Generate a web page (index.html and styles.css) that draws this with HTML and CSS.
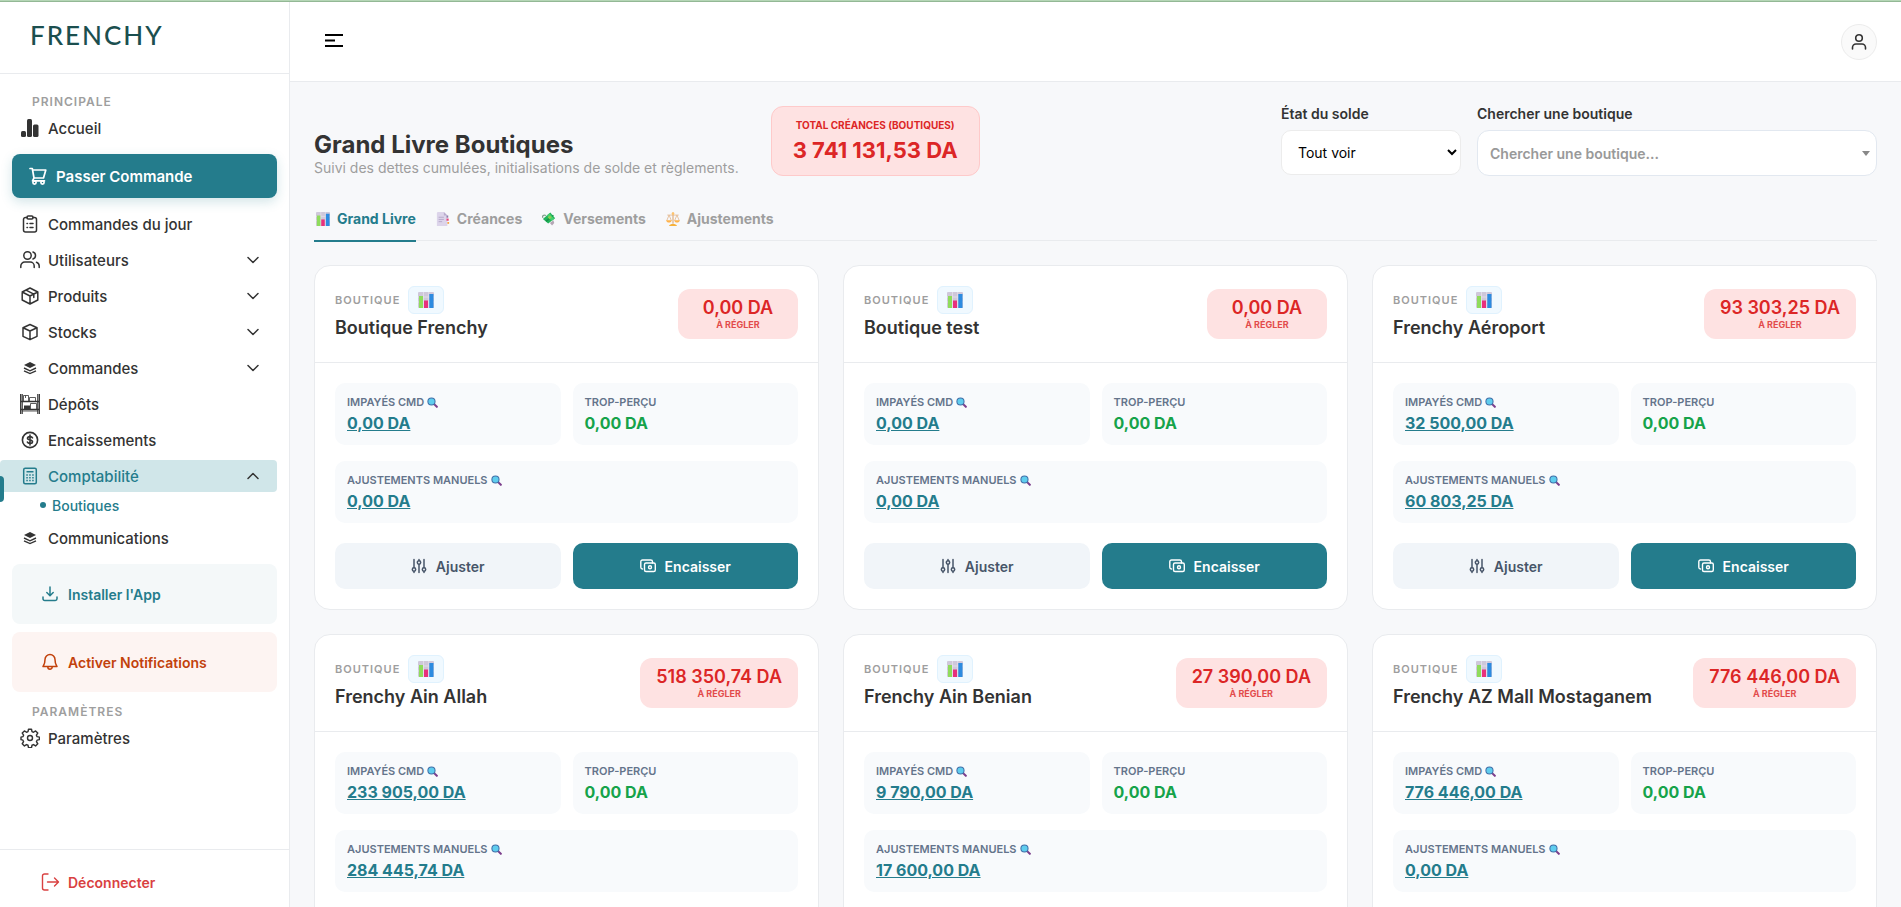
FILE: index.html
```html
<!DOCTYPE html>
<html lang="fr">
<head>
    <meta charset="UTF-8">
    <meta name="viewport" content="width=device-width, initial-scale=1.0">
    <title>Frenchy - Grand Livre Boutiques</title>
    <link rel="stylesheet" href="styles.css">
</head>
<body>
    <!-- Icon sprite -->
    <svg class="sprite" aria-hidden="true">
        <symbol id="i-stats" viewBox="0 0 20 20"><g fill="currentColor"><rect x="1" y="13" width="5" height="6" rx="1.5"/><rect x="7" y="1" width="5" height="18" rx="1.5"/><rect x="13" y="6.5" width="5.5" height="12.5" rx="1.5"/></g></symbol>
        <symbol id="i-cart" viewBox="0 0 20 20"><g fill="none" stroke="currentColor" stroke-width="1.7" stroke-linecap="round" stroke-linejoin="round"><path d="M2 2.5h2.3l1.7 9.5h9.5l2.3-8H4.6M6 12l-1.5 2.8h12"/><circle cx="6.5" cy="16.5" r="1.6"/><circle cx="14.5" cy="16.5" r="1.6"/></g></symbol>
        <symbol id="i-clipboard" viewBox="0 0 20 20"><g fill="none" stroke="currentColor" stroke-width="1.5" stroke-linecap="round"><path d="M7 3.5H5.5a2 2 0 0 0-2 2V16a2 2 0 0 0 2 2h9a2 2 0 0 0 2-2V5.500a2 2 0 0 0-2-2H13"/><rect x="7" y="2" width="6" height="3" rx="1.2"/><path d="M7 9.500h.5M10 9.500h3M7 13.500h.5M10 13.500h3"/></g></symbol>
        <symbol id="i-users" viewBox="0 0 20 20"><g fill="none" stroke="currentColor" stroke-width="1.5" stroke-linecap="round"><circle cx="7.5" cy="5.5" r="3.7"/><path d="M.8 17.500V16a4 4 0 0 1 4-4h5.400a4 4 0 0 1 4 4v1.500M13 2a3.700 3.700 0 0 1 0 7M16.500 12.200a4 4 0 0 1 2.700 3.800v1.500"/></g></symbol>
        <symbol id="i-package" viewBox="0 0 20 20"><g fill="none" stroke="currentColor" stroke-width="1.5" stroke-linejoin="round" stroke-linecap="round"><path d="M10 2l7.800 4v8L10 18l-7.800-4V6zM2.200 6L10 10l7.800-4M10 10v8M6 4.200l7.800 4v3.300"/></g></symbol>
        <symbol id="i-box" viewBox="0 0 20 20"><g fill="none" stroke="currentColor" stroke-width="1.5" stroke-linejoin="round"><path d="M10 2.500l7 3.200v8.600l-7 3.400-7-3.400V5.700zM3 5.700L10 9l7-3.300M10 9v8.500"/></g></symbol>
        <symbol id="i-layers" viewBox="0 0 20 20"><path fill="currentColor" d="M10 4l6 3-6 3-6-3z"/><path d="M4 10l6 2.800 6-2.800M4 12.800l6 2.800 6-2.800" fill="none" stroke="currentColor" stroke-width="1.4"/></symbol>
        <symbol id="i-shelf" viewBox="0 0 20 20"><g fill="none" stroke="currentColor"><path d="M.8 0v20M19.200 0v20" stroke-width="1.5"/><path d="M1 7.500h18M1 15.500h18" stroke-width="1.4"/><path d="M3.500 7V1.500h5V7M5.500 1.500V4M9.500 7V3.500h6V7M10.500 15V9.500h6V15M2.500 0v20M17.500 0v20M2 17h16" stroke-width=".8"/></g><path fill="currentColor" d="M4 11.500h6V15H4z"/></symbol>
        <symbol id="i-dollar" viewBox="0 0 20 20"><g fill="none" stroke="currentColor" stroke-width="1.6" stroke-linecap="round"><circle cx="10" cy="10" r="7.6"/><path d="M12.500 7.800c-.4-.8-1.300-1.200-2.500-1.200-1.400 0-2.500.6-2.500 1.700 0 2.500 5 .9 5 3.400 0 1.100-1.100 1.700-2.500 1.700-1.200 0-2.200-.4-2.600-1.300M10 5v10"/></g></symbol>
        <symbol id="i-calc" viewBox="0 0 20 20"><g fill="none" stroke="currentColor" stroke-width="1.5"><rect x="3.7" y="2.2" width="12.6" height="15.6" rx="1.5"/><path d="M6.500 5.700h7M6.300 9h1.500M9.200 9h1.500M12.200 9h1.500M6.300 11.800h1.500M9.200 11.800h1.500M12.200 11.800h1.500M6.300 14.600h1.500M9.200 14.600h1.500M12.200 14.600h1.500"/></g></symbol>
        <symbol id="i-down" viewBox="0 0 16 16"><path d="M3 5.500l5 5 5-5" fill="none" stroke="currentColor" stroke-width="1.5" stroke-linecap="round" stroke-linejoin="round"/></symbol>
        <symbol id="i-up" viewBox="0 0 16 16"><path d="M3 10.500l5-5 5 5" fill="none" stroke="currentColor" stroke-width="1.5" stroke-linecap="round" stroke-linejoin="round"/></symbol>
        <symbol id="i-download" viewBox="0 0 20 20"><path d="M10 3v8.500M6.800 8.500l3.200 3.200 3.200-3.200M3 13v1.800A1.700 1.700 0 0 0 4.700 16.500h10.600a1.700 1.700 0 0 0 1.700-1.700V13" fill="none" stroke="currentColor" stroke-width="1.5" stroke-linecap="round" stroke-linejoin="round"/></symbol>
        <symbol id="i-bell" viewBox="0 0 20 20"><path d="M10 2.500a5 5 0 0 0-5 5c0 4.500-1.200 5.500-2 7h14c-.8-1.500-2-2.500-2-7a5 5 0 0 0-5-5zM7.800 15a2.200 2.200 0 0 0 4.400 0" fill="none" stroke="currentColor" stroke-width="1.5" stroke-linecap="round" stroke-linejoin="round"/></symbol>
        <symbol id="i-gear" viewBox="0 0 24 24"><path d="M12 9a3 3 0 1 0 0 6 3 3 0 0 0 0-6zM10.200 1.500h3.600l.6 2.800 1.800.8 2.500-1.600 2.600 2.600-1.600 2.500.8 1.800 2.800.6v3l-2.800.6-.8 1.800 1.600 2.500-2.600 2.600-2.500-1.600-1.800.8-.6 2.800h-3.600l-.6-2.800-1.800-.8-2.500 1.600-2.600-2.600 1.600-2.500-.8-1.800-2.300-.6v-3l2.300-.6.8-1.800-1.600-2.500 2.600-2.600 2.500 1.600 1.800-.8z" fill="none" stroke="currentColor" stroke-width="1.7" stroke-linejoin="round"/></symbol>
        <symbol id="i-logout" viewBox="0 0 20 20"><path d="M8 2H4.500A2 2 0 0 0 2.500 4v12a2 2 0 0 0 2 2H8M7.500 10H18M14.500 6l4 4-4 4" fill="none" stroke="currentColor" stroke-width="1.4" stroke-linecap="round" stroke-linejoin="round"/></symbol>
        <symbol id="i-menu" viewBox="0 0 20 20"><path d="M1 4h18M1 9.500h10M1 15h18" stroke="currentColor" stroke-width="2"/></symbol>
        <symbol id="i-user" viewBox="0 0 20 20"><g fill="none" stroke="currentColor" stroke-width="1.6" stroke-linecap="round"><circle cx="10" cy="6" r="3.3"/><path d="M3.500 17v-1.500a3.500 3.500 0 0 1 3.500-3.500h6a3.500 3.500 0 0 1 3.500 3.500V17"/></g></symbol>
        <symbol id="i-sliders" viewBox="0 0 16 16"><g fill="none" stroke="currentColor" stroke-width="1.5" stroke-linecap="round"><path d="M3 1.500v8M3 13.500v1M8 1.500v1M8 6.500v8M13 1.500v8M13 13.500v1"/><circle cx="3" cy="11.5" r="1.7"/><circle cx="8" cy="4.5" r="1.7"/><circle cx="13" cy="11.5" r="1.7"/></g></symbol>
        <symbol id="i-cash" viewBox="0 0 16 16"><g fill="none" stroke="currentColor" stroke-width="1.4" stroke-linecap="round" stroke-linejoin="round"><rect x="4.5" y="5" width="10.8" height="8.5" rx="1.5"/><path d="M2.500 11A1.700 1.700 0 0 1 .8 9.300V3.700A1.700 1.700 0 0 1 2.500 2h8.300a1.700 1.700 0 0 1 1.700 1.700V5"/><circle cx="10" cy="9.2" r="1.5"/></g></symbol>
        <symbol id="e-chart" viewBox="0 0 16 16"><rect width="16" height="16" rx="1" fill="#cfc8da"/><path d="M0 5h16M0 10h16M5.500 0v16M10.700 0v16" stroke="#e6e1ec" stroke-width=".8"/><rect x="1" y="4" width="4" height="12" fill="#8fdc5c"/><rect x="6" y="8.5" width="4" height="7.5" fill="#e8307c"/><rect x="11.3" y="2" width="4.2" height="14" fill="#2d8be0"/></symbol>
        <symbol id="e-doc" viewBox="0 0 16 16"><path d="M1 1.500A1.500 1.500 0 0 1 2.500 0H9l4 4v12H1z" fill="#dcd4ea"/><path d="M9 0l4 4H9z" fill="#b9accd"/><path d="M3 6h6M3 8.500h6M3 11h4" stroke="#b3a6c8" stroke-width="1"/><path d="M12 4h2v2.500h-2z" fill="#8c7cab"/><path d="M12 7.500h2.500V10H12z" fill="#e8457c"/><path d="M13 11.500h2v2h-2z" fill="#f7a03c"/></symbol>
        <symbol id="e-money" viewBox="0 0 16 16"><path d="M1 6.500C0 4 2 3 4.500 4" stroke="#7f9f8b" stroke-width="1.5" fill="none"/><path d="M1 8L9.500.5 15 7l-8 6z" fill="#22b35b"/><path d="M4 9.800L12.500 3l1 1.300L5.300 11.300z" fill="#159447"/><path d="M5.500 4l3-2.500 5.500 6.500-3 2.300z" fill="#43cf6e"/><path d="M6.500 6l2.500-2 2 2.300-2.500 2z" fill="#8fcf4e"/><path d="M9 12.500l4-3 1 3-2.500 3z" fill="#b5a7b5"/></symbol>
        <symbol id="e-scale" viewBox="0 0 16 16"><g fill="none" stroke="#e3b58a" stroke-width=".9"><path d="M1.500 3.500h13M3.500 3.500L.8 10M3.500 3.500L6.200 10M12.500 3.500L9.800 10M12.500 3.500l2.700 6.500"/><path d="M8 .5v13" stroke-width="1.5"/></g><path d="M.3 9.500h6.200c0 3.500-6.200 3.500-6.200 0zM9.500 9.500h6.200c0 3.500-6.200 3.500-6.200 0z" fill="#ffb24a"/><path d="M3.500 16c.5-3 8.500-3 9 0z" fill="#f6b13b"/><circle cx="8" cy="1.8" r="1.5" fill="#ffc36a"/></symbol>
        <symbol id="e-search" viewBox="0 0 16 16"><path d="M10 10l4.300 4.300" stroke="#7c3f8c" stroke-width="3" stroke-linecap="round"/><circle cx="6.5" cy="6.5" r="5.2" fill="#5fcdee" stroke="#3f6fa8" stroke-width="1.5"/></symbol>
    </svg>

    <div class="progress-bar"></div>
    <div class="layout">
        <aside class="sidebar">
            <div class="sidebar-header"><a href="#" class="logo">FRENCHY</a></div>
            <nav class="sidebar-nav">
                <h6 class="nav-title">Principale</h6>
                <a href="#" class="nav-item"><svg class="icon"><use href="#i-stats"/></svg>Accueil</a>
                <a href="#" class="nav-order"><svg class="icon"><use href="#i-cart"/></svg>Passer Commande</a>
                <a href="#" class="nav-item"><svg class="icon"><use href="#i-clipboard"/></svg>Commandes du jour</a>
                <a href="#" class="nav-item"><svg class="icon"><use href="#i-users"/></svg>Utilisateurs<svg class="chevron"><use href="#i-down"/></svg></a>
                <a href="#" class="nav-item"><svg class="icon"><use href="#i-package"/></svg>Produits<svg class="chevron"><use href="#i-down"/></svg></a>
                <a href="#" class="nav-item"><svg class="icon"><use href="#i-box"/></svg>Stocks<svg class="chevron"><use href="#i-down"/></svg></a>
                <a href="#" class="nav-item"><svg class="icon"><use href="#i-layers"/></svg>Commandes<svg class="chevron"><use href="#i-down"/></svg></a>
                <a href="#" class="nav-item"><svg class="icon"><use href="#i-shelf"/></svg>Dépôts</a>
                <a href="#" class="nav-item"><svg class="icon"><use href="#i-dollar"/></svg>Encaissements</a>
                <div class="nav-group">
                    <a href="#" class="nav-item active"><svg class="icon"><use href="#i-calc"/></svg>Comptabilité<svg class="chevron"><use href="#i-up"/></svg></a>
                    <a href="#" class="nav-sub">Boutiques</a>
                </div>
                <a href="#" class="nav-item"><svg class="icon"><use href="#i-layers"/></svg>Communications</a>
                <button type="button" class="nav-action install"><svg class="icon"><use href="#i-download"/></svg>Installer l'App</button>
                <button type="button" class="nav-action notify"><svg class="icon"><use href="#i-bell"/></svg>Activer Notifications</button>
                <h6 class="nav-title">Paramètres</h6>
                <a href="#" class="nav-item"><svg class="icon"><use href="#i-gear"/></svg>Paramètres</a>
            </nav>
            <div class="sidebar-footer">
                <a href="#" class="logout"><svg class="icon"><use href="#i-logout"/></svg>Déconnecter</a>
            </div>
        </aside>

        <div class="page">
            <header class="topbar">
                <button type="button" class="menu-btn" aria-label="Menu"><svg class="icon"><use href="#i-menu"/></svg></button>
                <button type="button" class="user-btn" aria-label="Profil"><svg class="icon"><use href="#i-user"/></svg></button>
            </header>

            <main class="content">
                <div class="page-head">
                    <div class="page-title">
                        <h1>Grand Livre Boutiques</h1>
                        <p>Suivi des dettes cumulées, initialisations de solde et règlements.</p>
                    </div>
                    <div class="total">
                        <span class="total-label">Total créances (Boutiques)</span>
                        <strong class="total-value">3 741 131,53 DA</strong>
                    </div>
                    <div class="filters">
                        <div class="field">
                            <label for="etat">État du solde</label>
                            <select id="etat" class="select-state">
                                <option>Tout voir</option>
                            </select>
                        </div>
                        <div class="field">
                            <label for="boutique">Chercher une boutique</label>
                            <div class="select-wrap">
                                <select id="boutique" class="select-shop">
                                    <option>Chercher une boutique...</option>
                                </select>
                            </div>
                        </div>
                    </div>
                </div>

                <nav class="tabs">
                    <a href="#" class="tab active"><svg class="emoji"><use href="#e-chart"/></svg>Grand Livre</a>
                    <a href="#" class="tab"><svg class="emoji"><use href="#e-doc"/></svg>Créances</a>
                    <a href="#" class="tab"><svg class="emoji"><use href="#e-money"/></svg>Versements</a>
                    <a href="#" class="tab"><svg class="emoji"><use href="#e-scale"/></svg>Ajustements</a>
                </nav>

                <div class="cards" id="cards"></div>
            </main>
        </div>
    </div>

    <script>
        const boutiques = [
            { nom: "Boutique Frenchy", solde: "0,00", impayes: "0,00", ajustements: "0,00" },
            { nom: "Boutique test", solde: "0,00", impayes: "0,00", ajustements: "0,00" },
            { nom: "Frenchy Aéroport", solde: "93 303,25", impayes: "32 500,00", ajustements: "60 803,25" },
            { nom: "Frenchy Ain Allah", solde: "518 350,74", impayes: "233 905,00", ajustements: "284 445,74" },
            { nom: "Frenchy Ain Benian", solde: "27 390,00", impayes: "9 790,00", ajustements: "17 600,00" },
            { nom: "Frenchy AZ Mall Mostaganem", solde: "776 446,00", impayes: "776 446,00", ajustements: "0,00" }
        ];

        const renderCard = (b) => `
            <article class="card">
                <div class="card-head">
                    <div>
                        <div class="card-kind">Boutique <button type="button" class="chart-btn" aria-label="Statistiques"><svg><use href="#e-chart"/></svg></button></div>
                        <h2>${b.nom}</h2>
                    </div>
                    <div class="balance"><strong>${b.solde} DA</strong><span>À régler</span></div>
                </div>
                <div class="card-body">
                    <div class="stat"><span class="stat-label">Impayés cmd <svg><use href="#e-search"/></svg></span><a href="#">${b.impayes} DA</a></div>
                    <div class="stat"><span class="stat-label">Trop-perçu</span><strong>0,00 DA</strong></div>
                    <div class="stat wide"><span class="stat-label">Ajustements manuels <svg><use href="#e-search"/></svg></span><a href="#">${b.ajustements} DA</a></div>
                </div>
                <div class="card-actions">
                    <button type="button" class="btn"><svg><use href="#i-sliders"/></svg>Ajuster</button>
                    <button type="button" class="btn primary"><svg><use href="#i-cash"/></svg>Encaisser</button>
                </div>
            </article>`;

        document.getElementById("cards").innerHTML = boutiques.map(renderCard).join("");
    </script>
</body>
</html>
```
FILE: styles.css
```css
* {
    box-sizing: border-box;
}
body {
    font-family: 'Inter', sans-serif;
    font-size: 14px;
    margin: 0;
    height: 100vh;
    display: flex;
    flex-direction: column;
    overflow: hidden;
    background-color: #f7f8fa;
    color: #333333;
}
a {
    color: inherit;
    text-decoration: none;
}
button, select {
    font-family: inherit;
    cursor: pointer;
}
h1, h2, h6, p {
    margin: 0;
}
.sprite {
    display: none;
}
.icon {
    width: 20px;
    height: 20px;
    flex-shrink: 0;
}
.progress-bar {
    height: 2px;
    flex-shrink: 0;
    background-color: #b5d6b6;
    border-bottom: 1px solid #93b895;
}
.layout {
    flex: 1;
    display: flex;
    min-height: 0;
}

/* Sidebar */
.sidebar {
    width: 290px;
    flex-shrink: 0;
    display: flex;
    flex-direction: column;
    background-color: #ffffff;
    border-right: 1px solid #e9ebee;
}
.sidebar-header {
    height: 72px;
    padding: 16px 30px;
    border-bottom: 1px solid #e9ebee;
}
.logo {
    font-family: 'Lato', sans-serif;
    font-size: 26px;
    line-height: 34px;
    font-weight: 500;
    letter-spacing: 2px;
    color: #1b4f4f;
}
.sidebar-nav {
    flex: 1;
    padding: 8px 12px 0 0;
    overflow-y: auto;
    scrollbar-width: none;
}
.nav-title {
    padding: 12px 0 2px 32px;
    font-size: 12px;
    line-height: 16px;
    font-weight: 600;
    letter-spacing: 1px;
    text-transform: uppercase;
    color: #9e9e9e;
}
.nav-item {
    display: flex;
    align-items: center;
    gap: 8px;
    height: 32px;
    margin-bottom: 4px;
    padding: 0 16px 0 20px;
    border-radius: 4px;
    font-size: 15px;
    font-weight: 500;
}
.chevron {
    width: 16px;
    height: 16px;
    margin-left: auto;
    color: #333333;
}
.nav-order {
    display: flex;
    align-items: center;
    gap: 8px;
    height: 44px;
    margin: 10px 0 10px 12px;
    padding: 0 16px;
    border-radius: 8px;
    background-color: #247c8c;
    box-shadow: 0 4px 12px rgba(36, 124, 140, 0.2);
    color: #ffffff;
    font-size: 15px;
    font-weight: 600;
}
.nav-group {
    position: relative;
}
.nav-group::before {
    content: "";
    position: absolute;
    left: 0;
    top: 16px;
    width: 4px;
    height: 26px;
    border-radius: 0 4px 4px 0;
    background-color: #247c8c;
}
.nav-item.active {
    margin-bottom: 0;
    background-color: #d0e6e9;
    color: #247c8c;
}
.nav-sub {
    display: flex;
    align-items: center;
    gap: 6px;
    height: 26px;
    margin-bottom: 4px;
    padding-left: 40px;
    font-weight: 500;
    color: #247c8c;
}
.nav-sub::before {
    content: "";
    width: 6px;
    height: 6px;
    border-radius: 50%;
    background-color: #247c8c;
}
.nav-action {
    display: flex;
    align-items: center;
    gap: 8px;
    width: calc(100% - 12px);
    height: 60px;
    margin: 8px 0 0 12px;
    padding: 0 28px;
    border: none;
    border-radius: 8px;
    font-size: 14px;
    font-weight: 600;
}
.install {
    margin-top: 10px;
    background-color: #f4f8f9;
    color: #247c8c;
}
.notify {
    background-color: #fdf4f2;
    color: #c2410c;
}
.sidebar-footer {
    padding: 22px 40px 15px;
    border-top: 1px solid #e9ebee;
}
.logout {
    display: flex;
    align-items: center;
    gap: 8px;
    font-weight: 600;
    color: #d94141;
}

/* Top bar */
.page {
    flex: 1;
    min-width: 0;
    display: flex;
    flex-direction: column;
}
.topbar {
    display: flex;
    align-items: center;
    justify-content: space-between;
    height: 80px;
    flex-shrink: 0;
    padding: 0 24px 0 32px;
    background-color: #ffffff;
    border-bottom: 1px solid #e9ebee;
}
.menu-btn {
    display: flex;
    padding: 2px 2px 4px;
    border: none;
    background: none;
    color: #000000;
}
.user-btn {
    display: flex;
    align-items: center;
    justify-content: center;
    width: 36px;
    height: 36px;
    padding: 0;
    border: 1px solid #ececec;
    border-radius: 50%;
    background-color: #fafafa;
    color: #333333;
}

/* Content */
.content {
    flex: 1;
    min-height: 0;
    padding: 24px;
    overflow-y: auto;
    scrollbar-width: none;
}
.page-head {
    display: flex;
    align-items: flex-end;
    gap: 32px;
}
h1 {
    font-size: 24px;
    line-height: 30px;
    font-weight: 700;
}
.page-title p {
    font-size: 14px;
    line-height: 16px;
    color: #9e9e9e;
}
.total {
    display: flex;
    flex-direction: column;
    gap: 2px;
    align-items: center;
    padding: 10px 21px;
    border: 1px solid #fecaca;
    border-radius: 12px;
    background-color: #fee2e2;
    color: #dc2626;
}
.total-label {
    font-size: 10px;
    line-height: 16px;
    font-weight: 700;
    text-transform: uppercase;
}
.total-value {
    font-size: 22px;
    line-height: 30px;
    font-weight: 700;
}
.filters {
    display: flex;
    align-items: flex-start;
    gap: 16px;
    margin-left: auto;
}
.field {
    display: flex;
    flex-direction: column;
    gap: 8px;
}
.field label {
    font-size: 14px;
    line-height: 16px;
    font-weight: 600;
}
.select-state {
    width: 180px;
    height: 45px;
    padding: 0 12px;
    border: 1px solid #ececec;
    border-radius: 10px;
    background-color: #ffffff;
    color: #000000;
    font-size: 14px;
}
.select-wrap {
    position: relative;
}
.select-wrap::after {
    content: "";
    position: absolute;
    right: 7px;
    top: 21px;
    border: 4px solid transparent;
    border-top: 5px solid #888888;
    border-bottom: none;
    pointer-events: none;
}
.select-shop {
    appearance: none;
    width: 400px;
    height: 46px;
    padding: 0 12px;
    border: 1px solid #e2e8f0;
    border-radius: 12px;
    background-color: #ffffff;
    color: #999999;
    font-size: 14px;
    font-weight: 600;
}
.tabs {
    display: flex;
    gap: 18px;
    height: 41px;
    margin: 24px 0;
    border-bottom: 1px solid #e9ebee;
}
.tab {
    display: flex;
    align-items: center;
    gap: 7px;
    height: 42px;
    padding: 0 0 3px 2px;
    border-bottom: 2px solid transparent;
    color: #9e9e9e;
    font-size: 14px;
    font-weight: 700;
}
.tab.active {
    color: #247c8c;
    border-bottom-color: #247c8c;
}
.emoji {
    width: 14px;
    height: 14px;
}

/* Cards */
.cards {
    display: grid;
    grid-template-columns: repeat(3, 1fr);
    gap: 24px;
}
.card {
    border: 1px solid #e9ebee;
    border-radius: 16px;
    background-color: #ffffff;
}
.card-head {
    display: flex;
    align-items: center;
    justify-content: space-between;
    padding: 20px;
    border-bottom: 1px solid #e9ebee;
}
.card-kind {
    display: flex;
    align-items: center;
    gap: 8px;
    height: 28px;
    font-size: 11px;
    font-weight: 600;
    letter-spacing: 1px;
    text-transform: uppercase;
    color: #9e9e9e;
}
.chart-btn {
    display: flex;
    align-items: center;
    justify-content: center;
    width: 36px;
    height: 28px;
    padding: 0;
    border: 1px solid #e0f2fe;
    border-radius: 6px;
    background-color: #f0f9ff;
}
.chart-btn svg {
    width: 16px;
    height: 16px;
}
.card h2 {
    font-size: 18px;
    line-height: 28px;
    font-weight: 600;
}
.balance {
    display: flex;
    flex-direction: column;
    align-items: center;
    min-width: 120px;
    padding: 8px 16px;
    border-radius: 12px;
    background-color: #fee2e2;
    color: #dc2626;
}
.balance strong {
    font-size: 18px;
    line-height: 22px;
    font-weight: 600;
}
.balance span {
    font-size: 9px;
    line-height: 12px;
    font-weight: 700;
    text-transform: uppercase;
    opacity: 0.8;
}
.card-body {
    display: grid;
    grid-template-columns: 1fr 1fr;
    gap: 16px 12px;
    padding: 20px;
}
.stat {
    display: flex;
    flex-direction: column;
    align-items: flex-start;
    gap: 4px;
    padding: 12px;
    border-radius: 10px;
    background-color: #f8fafc;
}
.stat.wide {
    grid-column: span 2;
}
.stat-label {
    display: flex;
    align-items: center;
    gap: 3px;
    font-size: 11px;
    line-height: 14px;
    font-weight: 600;
    text-transform: uppercase;
    color: #64748b;
}
.stat-label svg {
    width: 11px;
    height: 11px;
}
.stat a, .stat strong {
    font-size: 16px;
    line-height: 20px;
    font-weight: 700;
}
.stat a {
    color: #247c8c;
    text-decoration: underline;
}
.stat strong {
    color: #16a34a;
}
.card-actions {
    display: grid;
    grid-template-columns: 1fr 1fr;
    gap: 12px;
    padding: 0 20px 20px;
}
.btn {
    display: flex;
    align-items: center;
    justify-content: center;
    gap: 9px;
    height: 46px;
    border: none;
    border-radius: 10px;
    background-color: #f1f5f9;
    color: #475569;
    font-size: 14px;
    font-weight: 600;
}
.btn svg {
    width: 16px;
    height: 16px;
}
.btn.primary {
    background-color: #247c8c;
    color: #ffffff;
}
```
